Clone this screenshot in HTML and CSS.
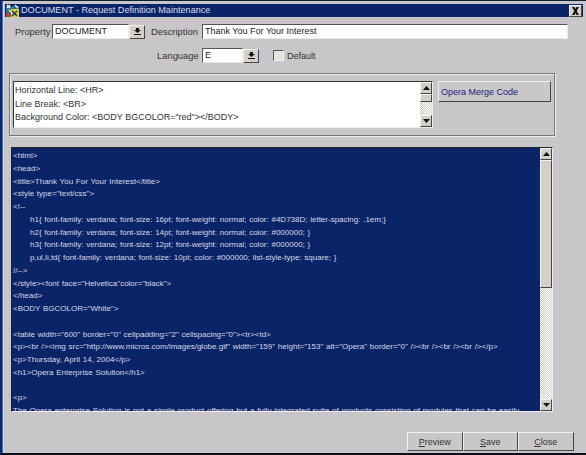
FILE: index.html
```html
<!DOCTYPE html>
<html lang="en">
<head>
<meta charset="utf-8">
<title>DOCUMENT - Request Definition Maintenance</title>
<link rel="stylesheet" href="styles.css">
</head>
<body>
<div class="window">
  <header class="titlebar">
    <svg class="appicon" width="14" height="13" viewBox="0 0 14 13"><rect x="0" y="2" width="13" height="11" fill="#2a6f8f"/><rect x="5" y="5" width="8" height="8" fill="#e8d020"/><path d="M1 1l3 3M4 1L1 4M3 6l3 3M9 1l3 3" stroke="#fff" stroke-width="1.4"/><path d="M6 7l5 5M11 7l-5 5" stroke="#183060" stroke-width="1.4"/><rect x="0" y="9" width="4" height="4" fill="#c04040"/></svg>
    <span class="titletext">DOCUMENT - Request Definition Maintenance</span>
    <button class="closebox" aria-label="Close"><svg width="9" height="8" viewBox="0 0 9 8"><path d="M1 0l2.500 0 1 2 1-2h2.500l-2.300 4 2.300 4h-2.500l-1-2-1 2h-2.500l2.300-4z" fill="#111"/></svg></button>
  </header>

  <div class="row row-property">
    <label class="lbl lbl-property">Property</label>
    <span class="field field-property">DOCUMENT</span>
    <button class="lov" aria-label="List"><svg width="7" height="7" viewBox="0 0 7 7"><path d="M2 0h3v2h2L3.500 5 0 2h2zM0 6h7v1H0z" fill="#111"/></svg></button>
    <label class="lbl lbl-desc">Description</label>
    <span class="field field-desc">Thank You For Your Interest</span>
  </div>

  <div class="row row-language">
    <label class="lbl lbl-lang">Language</label>
    <span class="field field-lang">E</span>
    <button class="lov" aria-label="List"><svg width="7" height="7" viewBox="0 0 7 7"><path d="M2 0h3v2h2L3.500 5 0 2h2zM0 6h7v1H0z" fill="#111"/></svg></button>
    <span class="check"></span>
    <label class="lbl lbl-default">Default</label>
  </div>

  <section class="group">
    <div class="merge-list">
      <div class="merge-text">
        <div>Horizontal Line: &lt;HR&gt;</div>
        <div>Line Break: &lt;BR&gt;</div>
        <div>Background Color: &lt;BODY BGCOLOR="red"&gt;&lt;/BODY&gt;</div>
      </div>
      <div class="scroll scroll-small">
        <span class="sbtn"><svg width="7" height="4" viewBox="0 0 7 4"><path d="M3.500 0L7 4H0z" fill="#111"/></svg></span>
        <span class="thumb thumb-small"></span>
        <span class="track"></span>
        <span class="sbtn"><svg width="7" height="4" viewBox="0 0 7 4"><path d="M0 0h7L3.500 4z" fill="#111"/></svg></span>
      </div>
    </div>
    <button class="merge-btn">Opera Merge Code</button>
  </section>

  <section class="editor">
    <div class="code">
<div>&lt;html&gt;</div>
<div>&lt;head&gt;</div>
<div>&lt;title&gt;Thank You For Your Interest&lt;/title&gt;</div>
<div>&lt;style type="text/css"&gt;</div>
<div>&lt;!--</div>
<div class="ind">h1{ font-family: verdana; font-size: 16pt; font-weight: normal; color: #4D738D; letter-spacing: .1em;}</div>
<div class="ind">h2{ font-family: verdana; font-size: 14pt; font-weight: normal; color: #000000; }</div>
<div class="ind">h3{ font-family: verdana; font-size: 12pt; font-weight: normal; color: #000000; }</div>
<div class="ind">p,ul,li,td{ font-family: verdana; font-size: 10pt; color: #000000; list-style-type: square; }</div>
<div>//--&gt;</div>
<div>&lt;/style&gt;&lt;font face="Helvetica"color="black"&gt;</div>
<div>&lt;/head&gt;</div>
<div>&lt;BODY BGCOLOR="White"&gt;</div>
<div>&nbsp;</div>
<div>&lt;table width="600" border="0" cellpadding="2" cellspacing="0"&gt;&lt;tr&gt;&lt;td&gt;</div>
<div>&lt;p&gt;&lt;br /&gt;&lt;img src="http://www.micros.com/images/globe.gif" width="159" height="153" alt="Opera" border="0" /&gt;&lt;br /&gt;&lt;br /&gt;&lt;br /&gt;&lt;/p&gt;</div>
<div>&lt;p&gt;Thursday, April 14, 2004&lt;/p&gt;</div>
<div>&lt;h1&gt;Opera Enterprise Solution&lt;/h1&gt;</div>
<div>&nbsp;</div>
<div>&lt;p&gt;</div>
<div>The Opera enterprise Solution is not a single product offering but a fully integrated suite of products consisting of modules that can be easily</div>
    </div>
    <div class="scroll scroll-big">
      <span class="sbtn"><svg width="7" height="4" viewBox="0 0 7 4"><path d="M3.500 0L7 4H0z" fill="#111"/></svg></span>
      <span class="thumb thumb-big"></span>
      <span class="track"></span>
      <span class="sbtn"><svg width="7" height="4" viewBox="0 0 7 4"><path d="M0 0h7L3.500 4z" fill="#111"/></svg></span>
    </div>
  </section>

  <footer class="actions">
    <button class="act"><u>P</u>review</button>
    <button class="act"><u>S</u>ave</button>
    <button class="act"><u>C</u>lose</button>
  </footer>
</div>
</body>
</html>
```
FILE: styles.css
```css
* { box-sizing: border-box; }
html, body { margin: 0; padding: 0; width: 586px; height: 455px; overflow: hidden; background: #c9c6c9; }
body { font-family: "Liberation Sans", Arial, sans-serif; font-size: 9px; color: #222; }
button { font-family: inherit; padding: 0; margin: 0; }

.window {
  width: 586px; height: 455px; display: flex; flex-direction: column;
  background: #c9c6c9;
  border-top: 1px solid #0c2230;
  border-bottom: 2px solid #0e0e18;
  border-left: 2px solid #0b2a6e;
  box-shadow: inset 1px 0 0 #3c70c0, inset 2px 0 0 #d8d8d8;
  padding: 3px 3px 0 3px;
}

.titlebar {
  height: 13px; flex: none; display: flex; align-items: center;
  background: #0a246a; color: #dcdce8; padding-left: 1px; padding-right: 1px;
}
.appicon { flex: none; margin-right: 1px; }
.titletext { font-size: 9.100px; line-height: 13px; flex: 1; white-space: nowrap; }
.closebox {
  width: 13px; height: 12px; flex: none; background: #d4d0c8; display: flex; align-items: center; justify-content: center;
  border: 1px solid; border-color: #f4f4f4 #444 #444 #f4f4f4;
}

.row { display: flex; align-items: center; flex: none; font-size: 9.400px; }
.row-property { margin-top: 7px; height: 15px; }
.row-language { margin-top: 9px; height: 15px; }

.lbl { white-space: nowrap; color: #333; }
.lbl-property { margin-left: 10px; width: 37px; }
.lbl-desc { margin-left: 6px; width: 51px; }
.lbl-lang { margin-left: 152px; width: 45px; }
.lbl-default { font-size: 9px; }

.field {
  height: 15px; background: #fff; line-height: 13px; padding-left: 2px; white-space: nowrap; overflow: hidden;
  border: 1px solid; border-color: #555 #e8e8e8 #e8e8e8 #555;
  color: #222; font-size: 9px;
}
.field-property { width: 77px; }
.field-desc { width: 366px; }
.field-lang { width: 41px; }

.lov {
  width: 16px; height: 14px; background: #d4d0c8; display: flex; align-items: center; justify-content: center;
  border: 1px solid; border-color: #f4f4f4 #444 #444 #f4f4f4;
}
.check {
  width: 11px; height: 11px; margin-left: 14px; margin-right: 3px; background: #e4e2de;
  border: 1px solid; border-color: #555 #f4f4f4 #f4f4f4 #555;
}

.group {
  flex: none; display: flex; align-items: flex-start; margin-top: 10px; margin-left: 4px; width: 546px; height: 63px;
  border: 1px solid #777; box-shadow: 1px 1px 0 #eee, inset 1px 1px 0 #eee; padding: 7px 3px;
}
.merge-list {
  width: 420px; height: 47px; display: flex; background: #fff;
  border: 1px solid; border-color: #333 #eee #eee #333;
}
.merge-text { flex: 1; padding: 2px 0 0 1px; line-height: 13.500px; font-size: 9px; white-space: nowrap; color: #333; overflow: hidden; }

.scroll { flex: none; display: flex; flex-direction: column; background: #d4d0c8; }
.scroll-small { width: 12px; }
.scroll-big { width: 12px; }
.sbtn {
  flex: none; height: 12px; display: flex; align-items: center; justify-content: center; background: #d4d0c8;
  border: 1px solid; border-color: #f4f4f4 #444 #444 #f4f4f4;
}
.thumb { flex: none; background: #d4d0c8; border: 1px solid; border-color: #f4f4f4 #444 #444 #f4f4f4; }
.thumb-small { height: 8px; }
.thumb-big { height: 128px; }
.track {
  flex: 1;
  background-color: #fff;
  background-image: repeating-conic-gradient(#d4d0c8 0 25%, #fff 0 50%);
  background-size: 2px 2px;
}

.merge-btn {
  width: 113px; height: 21px; margin-left: 5px; background: #cac7c8; color: #1a1a80; font-size: 9px; text-align: left; padding-left: 2px;
  border: 1px solid; border-color: #f0f0f0 #444 #444 #f0f0f0;
}

.editor {
  flex: none; display: flex; margin-top: 11px; margin-left: 6px; width: 542px; height: 265px;
  border: 1px solid; border-color: #222 #eee #eee #222;
}
.code {
  flex: 1; background: #0a2468; color: #d8d8e6; overflow: hidden; font-size: 8px; line-height: 12.750px; padding: 2px 0 0 1px; white-space: nowrap; word-spacing: .5px;
}
.ind { padding-left: 17px; }

.actions { flex: none; display: flex; margin-top: 20px; margin-left: 402px; }
.act {
  height: 19px; width: 55.500px; background: #cac7c8; color: #333; font-size: 9px;
  border: 1px solid; border-color: #f0f0f0 #444 #444 #f0f0f0;
}
```
